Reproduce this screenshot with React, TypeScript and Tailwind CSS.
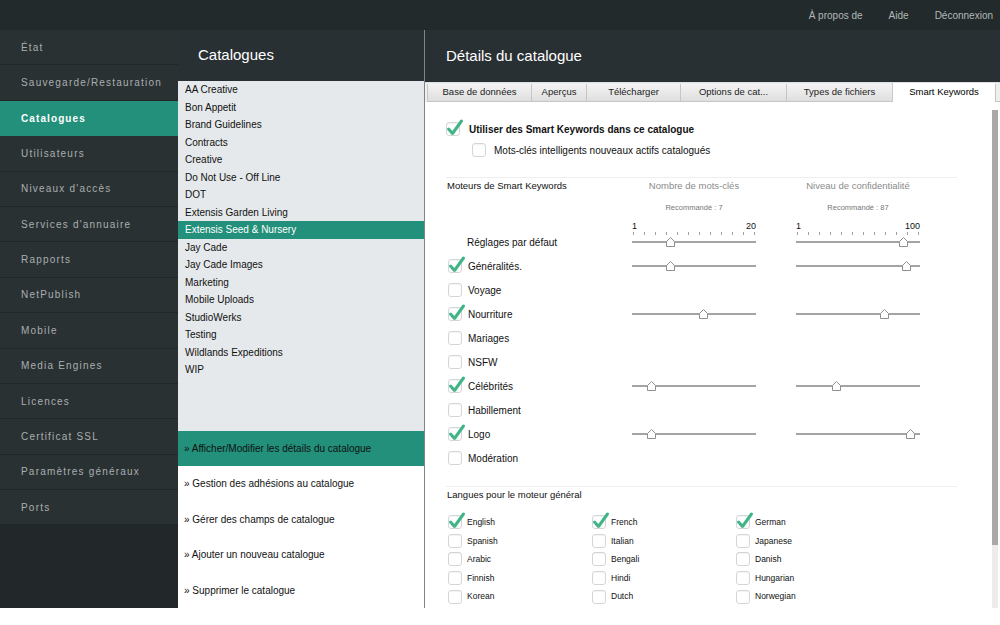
import React from 'react';

const NAV_ITEMS = [
  'État',
  'Sauvegarde/Restauration',
  'Catalogues',
  'Utilisateurs',
  "Niveaux d'accès",
  "Services d'annuaire",
  'Rapports',
  'NetPublish',
  'Mobile',
  'Media Engines',
  'Licences',
  'Certificat SSL',
  'Paramètres généraux',
  'Ports',
];

const CATALOGS = [
  'AA Creative',
  'Bon Appetit',
  'Brand Guidelines',
  'Contracts',
  'Creative',
  'Do Not Use - Off Line',
  'DOT',
  'Extensis Garden Living',
  'Extensis Seed & Nursery',
  'Jay Cade',
  'Jay Cade Images',
  'Marketing',
  'Mobile Uploads',
  'StudioWerks',
  'Testing',
  'Wildlands Expeditions',
  'WIP',
];

const ACTIONS = [
  'Afficher/Modifier les détails du catalogue',
  'Gestion des adhésions au catalogue',
  'Gérer des champs de catalogue',
  'Ajouter un nouveau catalogue',
  'Supprimer le catalogue',
];

const TABS = [
  { label: 'Base de données', w: 'w-[104px]' },
  { label: 'Aperçus', w: 'w-[55px]' },
  { label: 'Télécharger', w: 'w-[94px]' },
  { label: 'Options de cat...', w: 'w-[106px]' },
  { label: 'Types de fichiers', w: 'w-[106px]' },
  { label: 'Smart Keywords', w: 'w-[103px]', active: true },
];

interface Engine {
  label: string;
  checked?: boolean;
  count?: number;
  level?: number;
}

const ENGINES: Engine[] = [
  { label: 'Généralités.', checked: true, count: 38, level: 110 },
  { label: 'Voyage' },
  { label: 'Nourriture', checked: true, count: 71, level: 88 },
  { label: 'Mariages' },
  { label: 'NSFW' },
  { label: 'Célébrités', checked: true, count: 19, level: 40 },
  { label: 'Habillement' },
  { label: 'Logo', checked: true, count: 19, level: 114 },
  { label: 'Modération' },
];

const LANGUAGES: [string, boolean][] = [
  ['English', true], ['French', true], ['German', true],
  ['Spanish', false], ['Italian', false], ['Japanese', false],
  ['Arabic', false], ['Bengali', false], ['Danish', false],
  ['Finnish', false], ['Hindi', false], ['Hungarian', false],
  ['Korean', false], ['Dutch', false], ['Norwegian', false],
];

const Check = ({ checked }: { checked?: boolean }) => (
  <span className="relative block w-[14px] h-[14px] shrink-0 rounded-[3px] border border-[#d3d6d7] bg-white shadow-[inset_0_1px_1px_rgba(0,0,0,0.05)]">
    {checked && (
      <svg className="absolute left-[-1px] top-[-5px]" width="18" height="19" viewBox="0 0 18 19">
        <path
          d="M2.5 11 L6.5 15.5 L15.5 3"
          fill="none"
          stroke="#41b487"
          strokeWidth="3"
          strokeLinecap="round"
          strokeLinejoin="round"
        />
      </svg>
    )}
  </span>
);

const Slider = ({ pos, ticks }: { pos: number; ticks?: boolean }) => (
  <div className="relative self-stretch">
    {ticks && (
      <div className="absolute left-0 right-0 top-[2px] flex justify-between px-[1px]">
        {Array.from({ length: 12 }).map((_, i) => (
          <span key={i} className="block w-px h-[3px] bg-[#a0a0a0]" />
        ))}
      </div>
    )}
    <div className="absolute left-0 right-0 top-[11px] h-[2px] bg-[#a4a4a4]" />
    <svg
      className="absolute top-[7px]"
      style={{ left: pos - 4.5 }}
      width="9"
      height="10"
      viewBox="0 0 9 10"
    >
      <path d="M0.5 9.5 L0.5 4.5 L4.5 0.5 L8.5 4.5 L8.5 9.5 Z" fill="#ffffff" stroke="#8f8f8f" />
    </svg>
  </div>
);

export default function App() {
  return (
    <div className="w-[1000px] h-[625px] overflow-hidden bg-white font-['Liberation_Sans',Arial,sans-serif]">
      {/* top bar */}
      <header className="h-[30px] bg-[#222a2c] flex items-center justify-end gap-[26px] pr-[7px] text-[10px] text-[#b3b8b9]">
        <span>À propos de</span>
        <span>Aide</span>
        <span>Déconnexion</span>
      </header>

      <div className="flex h-[578px]">
        {/* main navigation */}
        <nav className="w-[178px] shrink-0 bg-[#222829] flex flex-col">
          {NAV_ITEMS.map((item) => (
            <div
              key={item}
              className={
                item === 'Catalogues'
                  ? 'h-[35.4px] shrink-0 flex items-center pl-[21px] bg-[#22907a] text-white font-bold text-[10px] tracking-[1.1px]'
                  : 'h-[35.4px] shrink-0 flex items-center pl-[21px] bg-[#2a3133] border-b border-[#212729] text-[#a9aeb0] text-[10px] tracking-[1.2px]'
              }
            >
              {item}
            </div>
          ))}
        </nav>

        {/* catalogue column */}
        <section className="w-[247px] shrink-0 flex flex-col border-r border-[#7f8587]">
          <div className="h-[51px] shrink-0 bg-[#293033] flex items-center pl-[20px] text-[15px] text-white">
            Catalogues
          </div>
          <ul className="flex-1 bg-[#e5e9eb]">
            {CATALOGS.map((c) => (
              <li
                key={c}
                className={
                  c === 'Extensis Seed & Nursery'
                    ? 'h-[17.5px] flex items-center pl-[7px] text-[10px] bg-[#22907a] text-white'
                    : 'h-[17.5px] flex items-center pl-[7px] text-[10px] text-[#111]'
                }
              >
                {c}
              </li>
            ))}
          </ul>
          <div className="shrink-0 bg-white">
            {ACTIONS.map((a, i) => (
              <div
                key={a}
                className={
                  i === 0
                    ? 'h-[35.5px] flex items-center pl-[6px] text-[10px] text-[#111] bg-[#22907a]'
                    : 'h-[35.5px] flex items-center pl-[6px] text-[10px] text-[#111]'
                }
              >
                » {a}
              </div>
            ))}
          </div>
        </section>

        {/* details panel */}
        <section className="flex-1 flex flex-col min-w-0">
          <div className="h-[52px] shrink-0 bg-[#293033] flex items-center pl-[21px] text-[15px] text-white">
            Détails du catalogue
          </div>
          <div className="h-[20px] shrink-0 flex items-end pl-[2px] bg-[#eef0f0] border-t border-[#dde1e2]">
            {TABS.map((t) => (
              <div
                key={t.label}
                className={
                  t.active
                    ? `${t.w} h-[19px] flex items-center justify-center text-[9.5px] text-black bg-white border-l border-[#c8c8c8]`
                    : `${t.w} h-[18px] flex items-center justify-center text-[9.5px] text-[#222] bg-gradient-to-b from-[#f4f4f4] to-[#dedede] border-l border-b border-[#c6c6c6]`
                }
              >
                {t.label}
              </div>
            ))}
            <div className="flex-1 h-[18px] border-l border-b border-[#c6c6c6]" />
          </div>

          <div className="flex-1 flex min-h-0">
            <div className="flex-1 pl-[21px] pr-[35px] pt-[17px] flex flex-col text-[#111]">
              <div className="h-[20px] flex items-center gap-[9px]">
                <Check checked />
                <span className="text-[10px] font-bold">Utiliser des Smart Keywords dans ce catalogue</span>
              </div>
              <div className="h-[22px] flex items-center gap-[8px] pl-[26px]">
                <Check />
                <span className="text-[10px]">Mots-clés intelligents nouveaux actifs catalogués</span>
              </div>

              <div className="mt-[16px] border-t border-[#eeeeee]" />

              <div className="h-[16px] grid grid-cols-[186px_124px_40px_124px] items-center text-[9.5px]">
                <span className="pl-[1px]">Moteurs de Smart Keywords</span>
                <span className="text-center text-[#8b8b8b]">Nombre de mots-clés</span>
                <span />
                <span className="text-center text-[#8b8b8b]">Niveau de confidentialité</span>
              </div>
              <div className="mt-[8px] h-[12px] grid grid-cols-[186px_124px_40px_124px] items-center text-[7.5px] text-[#777]">
                <span />
                <span className="text-center">Recommandé : 7</span>
                <span />
                <span className="text-center">Recommandé : 87</span>
              </div>
              <div className="mt-[6px] h-[10px] grid grid-cols-[186px_124px_40px_124px] items-center text-[9px]">
                <span />
                <span className="flex justify-between">
                  <span>1</span>
                  <span>20</span>
                </span>
                <span />
                <span className="flex justify-between">
                  <span>1</span>
                  <span>100</span>
                </span>
              </div>
              <div className="h-[24px] grid grid-cols-[186px_124px_40px_124px] items-center">
                <span className="pl-[21px] text-[10px]">Réglages par défaut</span>
                <Slider pos={38} ticks />
                <span />
                <Slider pos={107} ticks />
              </div>
              {ENGINES.map((e) => (
                <div key={e.label} className="h-[24px] grid grid-cols-[186px_124px_40px_124px] items-center">
                  <span className="flex items-center gap-[6px] pl-[2px] text-[10px]">
                    <Check checked={e.checked} />
                    {e.label}
                  </span>
                  {e.count !== undefined ? <Slider pos={e.count} /> : <span />}
                  <span />
                  {e.level !== undefined ? <Slider pos={e.level} /> : <span />}
                </div>
              ))}

              <div className="mt-[16px] border-t border-[#eeeeee]" />
              <div className="h-[17px] flex items-center pl-[1px] text-[9.5px]">Langues pour le moteur général</div>
              <div className="mt-[9px] grid grid-cols-[144px_144px_144px] pl-[2px]">
                {LANGUAGES.map(([lang, on]) => (
                  <div key={lang} className="h-[18.6px] flex items-center gap-[5px] text-[8.5px]">
                    <Check checked={on} />
                    {lang}
                  </div>
                ))}
              </div>
            </div>

            {/* scrollbar */}
            <div className="w-[8px] shrink-0 pr-[2px] pt-[8px] flex flex-col">
              <div className="h-[435px] bg-[#a9a9a9]" />
              <div className="flex-1 bg-[#ececec]" />
            </div>
          </div>
        </section>
      </div>
    </div>
  );
}
